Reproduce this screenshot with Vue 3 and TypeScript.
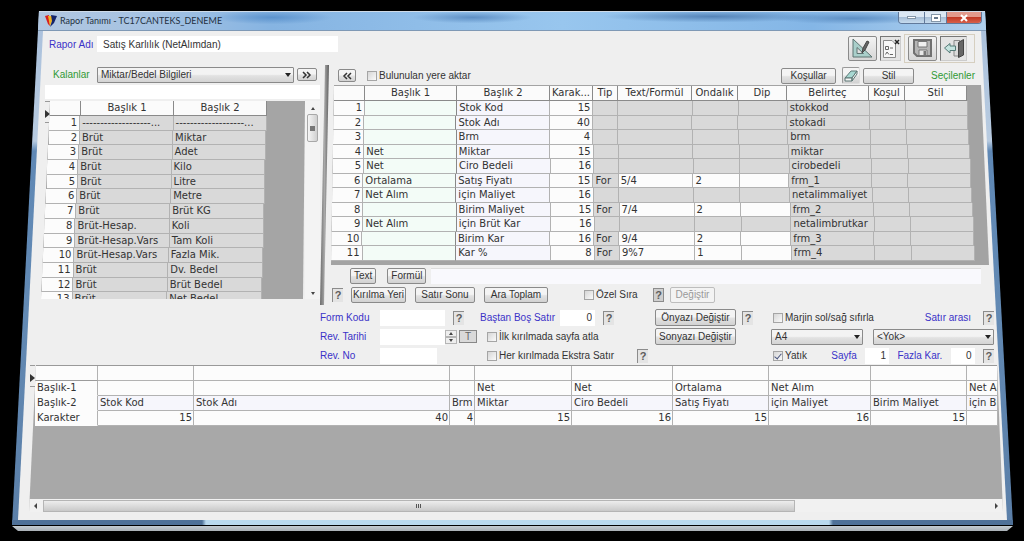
<script setup lang="ts">
import { ref } from 'vue'

interface ReportColumn {
  title1: string
  title2: string
  chars: number
  formula?: string
  decimals?: string
  token: string
}

const reportName = ref('Satış Karlılık (NetAlımdan)')
const group = ref('Miktar/Bedel Bilgileri')
const search = ref('')
const formulaText = ref('')
const insertHere = ref(false)
const customOrder = ref(false)
const formCode = ref('')
const revDate = ref('')
const revNo = ref('')
const emptyRows = ref('0')
const skipPage = ref(false)
const extraRow = ref(false)
const resetMargins = ref(false)
const landscape = ref(true)
const paper = ref('A4')
const lineSpacing = ref('<Yok>')
const pageNo = ref('1')
const extraChars = ref('0')

const dashes = '-------------------...'
const available: [string, string][] = [
  [dashes, dashes],
  ['Brüt', 'Miktar'],
  ['Brüt', 'Adet'],
  ['Brüt', 'Kilo'],
  ['Brüt', 'Litre'],
  ['Brüt', 'Metre'],
  ['Brüt', 'Brüt KG'],
  ['Brüt-Hesap.', 'Koli'],
  ['Brüt-Hesap.Vars', 'Tam Koli'],
  ['Brüt-Hesap.Vars', 'Fazla Mik.'],
  ['Brüt', 'Dv. Bedel'],
  ['Brüt', 'Brüt Bedel'],
  ['Brüt', 'Net Bedel'],
]

const selected: ReportColumn[] = [
  { title1: '', title2: 'Stok Kod', chars: 15, token: 'stokkod' },
  { title1: '', title2: 'Stok Adı', chars: 40, token: 'stokadi' },
  { title1: '', title2: 'Brm', chars: 4, token: 'brm' },
  { title1: 'Net', title2: 'Miktar', chars: 15, token: 'miktar' },
  { title1: 'Net', title2: 'Ciro Bedeli', chars: 16, token: 'cirobedeli' },
  { title1: 'Ortalama', title2: 'Satış Fiyatı', chars: 15, formula: '5/4', decimals: '2', token: 'frm_1' },
  { title1: 'Net Alım', title2: 'için Maliyet', chars: 16, token: 'netalimmaliyet' },
  { title1: '', title2: 'Birim Maliyet', chars: 15, formula: '7/4', decimals: '2', token: 'frm_2' },
  { title1: 'Net Alım', title2: 'için Brüt Kar', chars: 16, token: 'netalimbrutkar' },
  { title1: '', title2: 'Birim Kar', chars: 16, formula: '9/4', decimals: '2', token: 'frm_3' },
  { title1: '', title2: 'Kar %', chars: 8, formula: '9%7', decimals: '1', token: 'frm_4' },
]

const preview = selected.slice(0, 9)

// Rows get wider towards the bottom, following the tilted window edges.
function lean(row: number, rows: number, left: number, right: number) {
  const t = row / rows
  return {
    marginLeft: `${-Math.round(left * t)}px`,
    marginRight: `${-Math.round(right * t)}px`,
  }
}
</script>

<template>
  <main class="stage">
    <section class="frame">
      <header class="titlebar">
        <svg class="logo" viewBox="0 0 12 12" aria-hidden="true">
          <path d="M0 1 L4 0 L5 11 L3 9 Z" fill="#d81f1f" />
          <path d="M3 1 L7 1 L7 6 L5 11 Z" fill="#f0b323" />
          <path d="M6 0 L12 1 L9 8 L5 12 L7 6 Z" fill="#14256b" />
        </svg>
        <h1>Rapor Tanımı - TC17CANTEKS_DENEME</h1>
        <div class="controls">
          <button type="button" class="min" aria-label="Simge durumuna küçült"><span></span></button>
          <button type="button" class="max" aria-label="Ekranı kapla"><span></span></button>
          <button type="button" class="close" aria-label="Kapat">
            <svg viewBox="0 0 8 8"><path d="M1 1 L7 7 M7 1 L1 7" stroke="#fff" stroke-width="2" /></svg>
          </button>
        </div>
      </header>

      <div class="client">
        <div class="top">
          <label class="blue" for="name">Rapor Adı</label>
          <input id="name" v-model="reportName" class="name" type="text" />
          <div class="tools">
            <button type="button" class="tool wide" aria-label="Tasarım">
              <svg viewBox="0 0 27 23">
                <path d="M4 2 V20 H23 Z M8 10.500 V16.500 H14.500 Z" fill="#a9cfca" fill-rule="evenodd" stroke="#5d7371" />
                <path d="M18 4 L20 5 L16 13 L13 16 L14 11 Z" fill="#666" stroke="#444" />
              </svg>
            </button>
            <button type="button" class="tool sunk" aria-label="Belge">
              <svg viewBox="0 0 19 23">
                <path d="M2.500 3.500 H11 L14.500 7 V20.500 H2.500 Z" fill="#f8f8f8" stroke="#8a8a8a" />
                <path d="M4.500 9.500 H7.500 V12.500 H4.500 Z M9 11 H12 M4.500 17.500 L6 15 L8 17.500 M9 17.500 H12" fill="none" stroke="#666" />
                <path d="M14 3 L18 7 M18 3 L14 7" stroke="#222" stroke-width="1.500" />
              </svg>
            </button>
            <div class="pair">
              <button type="button" class="tool wide" aria-label="Kaydet">
                <svg viewBox="0 0 27 23">
                  <path d="M5 3 H22 V19 H8 L5 16 Z" fill="#b5b5b5" stroke="#707070" stroke-width="2" />
                  <path d="M9 4.500 H18 V10 H9 Z" fill="#f0f0f0" stroke="#777" />
                  <path d="M10 13 H18 V18.500 H10 Z" fill="#e8e8e8" stroke="#777" />
                  <path d="M14.500 14 H17 V18 H14.500 Z" fill="#777" />
                </svg>
              </button>
              <button type="button" class="tool exit sunk" aria-label="Çıkış">
                <svg viewBox="0 0 25 23">
                  <path d="M13 3.500 H19 V19 H13 Z" fill="#dcdcdc" stroke="#8a8a8a" />
                  <path d="M17.500 5.500 L22.500 2.500 V18 L17.500 20.500 Z" fill="#666" stroke="#444" />
                  <path d="M3.500 11 L9 6.500 V9 H14.500 V13.500 H9 V16 Z" fill="#c5e4e0" stroke="#557a77" />
                </svg>
              </button>
            </div>
          </div>
        </div>

        <div class="body">
          <section class="left">
            <div class="bar leftbar">
              <label class="green" for="group">Kalanlar</label>
              <span class="drop groupdrop">
                <select id="group" v-model="group"><option>Miktar/Bedel Bilgileri</option></select>
              </span>
              <button type="button" class="btn chev" aria-label="Aktar">
                <svg viewBox="0 0 10 8"><path d="M1 1 L4 4 L1 7 M5 1 L8 4 L5 7" /></svg>
              </button>
            </div>
            <input v-model="search" class="search" type="text" aria-label="Ara" />
            <div class="availwrap">
              <span class="marker"></span>
              <div class="availbox">
                <table class="grid avail">
                  <thead>
                    <tr><th></th><th>Başlık 1</th><th>Başlık 2</th></tr>
                  </thead>
                  <tbody>
                    <tr v-for="(row, i) in available" :key="i" :style="lean(i + 1, 13, 9, -5)">
                      <td class="num white">{{ i + 1 }}</td>
                      <td>{{ row[0] }}</td>
                      <td>{{ row[1] }}</td>
                    </tr>
                  </tbody>
                </table>
              </div>
              <div class="vscroll">
                <i class="up"></i>
                <span class="vthumb"></span>
                <i class="down"></i>
              </div>
            </div>
          </section>

          <div class="splitter"></div>

          <section class="right">
            <div class="bar rightbar">
              <button type="button" class="btn chev back" aria-label="Geri al">
                <svg viewBox="0 0 10 8"><path d="M5 1 L2 4 L5 7 M9 1 L6 4 L9 7" /></svg>
              </button>
              <label class="check"><input v-model="insertHere" type="checkbox" />Bulunulan yere aktar</label>
              <div class="barend">
                <button type="button" class="btn kosul">Koşullar</button>
                <button type="button" class="btn eraser" aria-label="Temizle">
                  <svg viewBox="0 0 16 16">
                    <path d="M2 10 L8 3 H14 L9 10 Z" fill="#a7d8d2" stroke="#5c7775" />
                    <path d="M2 10 H9 V13 H2 Z M9 10 L14 3 V6 L9 13 Z" fill="#f4f4f4" stroke="#5c7775" />
                  </svg>
                </button>
                <button type="button" class="btn stil">Stil</button>
                <span class="green">Seçilenler</span>
              </div>
            </div>
            <div class="selbox">
              <table class="grid sel">
                <thead>
                  <tr>
                    <th></th><th>Başlık 1</th><th>Başlık 2</th><th>Karak...</th><th>Tip</th>
                    <th>Text/Formül</th><th>Ondalık</th><th>Dip</th><th>Belirteç</th><th>Koşul</th><th>Stil</th>
                  </tr>
                </thead>
                <tbody>
                  <tr v-for="(c, i) in selected" :key="c.token" :style="lean(i + 1, 11, 3, 8)">
                    <td class="num white">{{ i + 1 }}</td>
                    <td class="mint">{{ c.title1 }}</td>
                    <td class="lilac">{{ c.title2 }}</td>
                    <td class="num white">{{ c.chars }}</td>
                    <td>{{ c.formula ? 'For' : '' }}</td>
                    <td :class="{ white: c.formula }">{{ c.formula }}</td>
                    <td :class="{ white: c.formula }">{{ c.decimals }}</td>
                    <td :class="{ white: c.formula }"></td>
                    <td>{{ c.token }}</td>
                    <td></td>
                    <td></td>
                  </tr>
                </tbody>
              </table>
            </div>
            <div class="formulabar">
              <button type="button" class="btn">Text</button>
              <button type="button" class="btn">Formül</button>
              <input v-model="formulaText" type="text" aria-label="Formül metni" />
            </div>
            <div class="breakbar">
              <button type="button" class="help" aria-label="Yardım">?</button>
              <button type="button" class="btn b1">Kırılma Yeri</button>
              <button type="button" class="btn b2">Satır Sonu</button>
              <button type="button" class="btn b3">Ara Toplam</button>
              <label class="check order"><input v-model="customOrder" type="checkbox" />Özel Sıra</label>
              <button type="button" class="help dark" aria-label="Yardım">?</button>
              <button type="button" class="btn b4" disabled>Değiştir</button>
            </div>
          </section>
        </div>

        <div class="form">
          <div class="col ids">
            <div class="line">
              <label class="blue" for="code">Form Kodu</label>
              <input id="code" v-model="formCode" class="w66" type="text" />
              <button type="button" class="help gap" aria-label="Yardım">?</button>
            </div>
            <div class="line">
              <label class="blue" for="date">Rev. Tarihi</label>
              <input id="date" v-model="revDate" class="w66" type="text" />
              <span class="spin">
                <button type="button" aria-label="Artır"><i class="up"></i></button>
                <button type="button" aria-label="Azalt"><i class="down"></i></button>
              </span>
              <button type="button" class="today">T</button>
            </div>
            <div class="line">
              <label class="blue" for="rev">Rev. No</label>
              <input id="rev" v-model="revNo" class="w57" type="text" />
            </div>
          </div>
          <div class="col opts">
            <div class="line">
              <label class="blue empties" for="empty">Baştan Boş Satır</label>
              <input id="empty" v-model="emptyRows" class="w34 r" type="text" />
              <button type="button" class="help gap" aria-label="Yardım">?</button>
            </div>
            <div class="line inset">
              <label class="check"><input v-model="skipPage" type="checkbox" />İlk kırılmada sayfa atla</label>
            </div>
            <div class="line inset">
              <label class="check"><input v-model="extraRow" type="checkbox" />Her kırılmada Ekstra Satır</label>
              <button type="button" class="help end" aria-label="Yardım">?</button>
            </div>
          </div>
          <div class="col texts">
            <div class="line">
              <button type="button" class="btn wbtn">Önyazı Değiştir</button>
              <button type="button" class="help" aria-label="Yardım">?</button>
            </div>
            <div class="line">
              <button type="button" class="btn wbtn">Sonyazı Değiştir</button>
            </div>
          </div>
          <div class="col page">
            <div class="line">
              <label class="check"><input v-model="resetMargins" type="checkbox" />Marjin sol/sağ sıfırla</label>
              <label class="blue spacing" for="spacing">Satır arası</label>
              <button type="button" class="help" aria-label="Yardım">?</button>
            </div>
            <div class="line drops">
              <span class="drop paper">
                <select v-model="paper" aria-label="Kağıt"><option>A4</option></select>
              </span>
              <span class="drop space">
                <select id="spacing" v-model="lineSpacing"><option>&lt;Yok&gt;</option></select>
              </span>
            </div>
            <div class="line">
              <label class="check yatik"><input v-model="landscape" type="checkbox" />Yatık</label>
              <label class="blue" for="page">Sayfa</label>
              <input id="page" v-model="pageNo" class="plain r" type="text" />
              <label class="blue" for="extra">Fazla Kar.</label>
              <input id="extra" v-model="extraChars" class="plain r" type="text" />
              <button type="button" class="help" aria-label="Yardım">?</button>
            </div>
          </div>
        </div>

        <section class="preview">
          <span class="marker"></span>
          <div class="prevbox">
            <table class="grid prev">
              <tbody>
                <tr>
                  <th></th>
                  <td v-for="c in preview" :key="c.token" class="white"></td>
                </tr>
                <tr>
                  <th scope="row">Başlık-1</th>
                  <td v-for="c in preview" :key="c.token" class="white">{{ c.title1 }}</td>
                </tr>
                <tr>
                  <th scope="row">Başlık-2</th>
                  <td v-for="c in preview" :key="c.token" class="lilac">{{ c.title2 }}</td>
                </tr>
                <tr>
                  <th scope="row">Karakter</th>
                  <td v-for="(c, i) in preview" :key="c.token" class="white num">{{ i < 8 ? c.chars : '' }}</td>
                </tr>
              </tbody>
            </table>
            <div class="hscroll">
              <i class="prevarrow"></i>
              <span class="hthumb"><b></b><b></b><b></b></span>
              <i class="nextarrow"></i>
            </div>
          </div>
        </section>
      </div>
    </section>
    <div class="base"></div>
  </main>
</template>

<style>
body {
  margin: 0;
  background: #000;
}
</style>

<style scoped>
* {
  box-sizing: border-box;
}
.stage {
  min-height: 100vh;
  padding: 11px 11px 0 12px;
  background: #000;
  color: #333;
  font: 10px/12px "Liberation Sans", Arial, sans-serif;
  overflow: hidden;
}
button,
input,
select {
  font: inherit;
  color: inherit;
  margin: 0;
  padding: 0;
  border: 0;
  border-radius: 0;
  outline: 0;
}
svg {
  display: block;
}

/* window frame */
.frame {
  padding: 0 6px 5px;
  clip-path: polygon(27px 0, calc(100% - 28px) 0, 100% 100%, 0 100%);
  background:
    linear-gradient(90deg, #4f7198 0 190px, #b9d9ee 194px calc(100% - 184px), #4f7198 calc(100% - 180px)) bottom / 100% 5px no-repeat,
    linear-gradient(180deg, #a9c0dc 0, #b8cbe0 130px, #5f88b5 140px, #6289b3 60%, #5b7fa8 100%);
}
.titlebar {
  display: flex;
  align-items: flex-start;
  height: 20px;
  margin: 0 -6px;
  padding: 0 31px 0 33px;
  border-top: 1px solid #cfdbe8;
  border-bottom: 1px solid #7f99b5;
  background:
    radial-gradient(ellipse 60px 7px at 26% 30%, #5c93cd 0, transparent 100%),
    radial-gradient(ellipse 60px 6px at 46% 30%, #5e8fc4 0, transparent 100%),
    radial-gradient(ellipse 110px 6px at 70% 25%, #5584b8 0, transparent 100%),
    radial-gradient(ellipse 80px 6px at 84% 35%, #5d8fc4 0, transparent 100%),
    linear-gradient(90deg, #b4c8e0 0, #a5c2e2 14%, #86b4e2 26%, #98c6ee 55%, #84b6e6 80%, #b6d3ee 100%);
}
.logo {
  width: 12px;
  height: 12px;
  margin-top: 3px;
}
h1 {
  margin: 2px 0 0 3px;
  font: 9px/14px Lato, "Open Sans", sans-serif;
  color: #23303f;
}
.controls {
  display: flex;
  margin-left: auto;
  height: 12px;
  border: 1px solid #61799a;
  border-top: 0;
  border-radius: 0 0 4px 4px;
  overflow: hidden;
}
.controls button {
  display: grid;
  place-items: center;
  width: 22px;
  background: linear-gradient(#dbe7f3 45%, #a9c0d8 50%, #c6dbee);
  border-right: 1px solid #61799a;
}
.controls .min {
  width: 26px;
}
.controls .min span {
  width: 9px;
  height: 3px;
  background: #fff;
  border: 1px solid #8496a8;
}
.controls .max span {
  width: 8px;
  height: 6px;
  background: #66788c;
  border: 2px solid #fff;
  outline: 1px solid #8496a8;
}
.controls .close {
  width: 34px;
  border: 0;
  background: linear-gradient(#e39a8c 45%, #c23a26 50%, #d8604a);
}
.close svg {
  width: 8px;
  height: 8px;
}
.client {
  padding-bottom: 8px;
  background: #efefef;
  clip-path: polygon(25px 0, calc(100% - 26px) 0, 100% 100%, 0 100%);
}
.base {
  height: 5px;
  margin-top: 1px;
  background: linear-gradient(#c4ccd2, #a9b0b6);
  clip-path: polygon(0 0, 100% 0, calc(100% - 6px) 100%, 6px 100%);
}

/* shared controls */
.blue {
  color: #3a32c8;
  white-space: nowrap;
}
.green {
  color: #2f9a35;
  white-space: nowrap;
}
.btn {
  height: 16px;
  padding: 0 4px;
  border: 1px solid #8a8a8a;
  border-radius: 2px;
  background: linear-gradient(#f4f4f4 45%, #e2e2e2 55%, #d2d2d2);
  line-height: 13px;
  white-space: nowrap;
}
.btn:disabled {
  color: #9a9a9a;
  border-color: #bdbdbd;
  background: #f3f3f3;
}
.check {
  display: flex;
  align-items: center;
  gap: 2px;
  white-space: nowrap;
}
.check input {
  appearance: none;
  width: 10px;
  height: 10px;
  border: 1px solid #a5a5a5;
  background: linear-gradient(135deg, #d6d6d6, #fafafa);
  display: grid;
  place-items: center;
}
.check input:checked::after {
  content: "";
  width: 3px;
  height: 6px;
  border: solid #4a5680;
  border-width: 0 1px 1px 0;
  transform: rotate(40deg);
}
.help {
  flex: none;
  width: 11px;
  height: 14px;
  background: #e4e4e4;
  border: solid #8c8c8c;
  border-width: 1px 0 0 1px;
  color: #5c5c5c;
  font: bold 11px/12px "Liberation Sans", Arial, sans-serif;
}
.help.dark {
  background: #cfcfcf;
  border-width: 1px;
}
.drop {
  position: relative;
  display: block;
  height: 16px;
}
.drop select {
  appearance: none;
  width: 100%;
  height: 100%;
  padding: 0 3px;
  border: 1px solid #8a8a8a;
  border-radius: 1px;
  background: linear-gradient(#f3f3f3 45%, #e2e2e2 55%, #d4d4d4);
}
.drop::after {
  content: "";
  position: absolute;
  right: 3px;
  top: 6px;
  border: 3px solid transparent;
  border-top: 4px solid #222;
  border-bottom: 0;
  pointer-events: none;
}

/* header strip */
.top {
  display: flex;
  align-items: flex-start;
  height: 33px;
  padding: 3px 32px 0 31px;
}
.top .blue {
  width: 48px;
  margin-top: 5px;
}
.name {
  width: 241px;
  height: 16px;
  margin-top: 2px;
  padding-left: 6px;
  background: #fff;
}
.tools {
  display: flex;
  align-items: center;
  gap: 3px;
  margin-left: auto;
}
.tool {
  display: grid;
  place-items: center;
  width: 21px;
  height: 25px;
  border: 1px solid #8a8a8a;
  border-radius: 2px;
  background: linear-gradient(#f3f3f3, #d6d6d6);
}
.tool.sunk {
  border-color: #777 #ccc #ccc #777;
  border-radius: 0;
  background: #e4e4e4;
}
.tool svg {
  width: 100%;
  height: 23px;
}
.tool.wide {
  width: 29px;
}
.tool.exit {
  width: 27px;
}
.pair {
  display: flex;
  align-items: center;
  gap: 3px;
  height: 29px;
  padding: 0 7px 0 3px;
  border: 1px solid #d6cfc0;
}

/* two panes */
.body {
  display: flex;
  padding-left: 27px;
}
.left {
  width: 275px;
  flex: none;
}
.bar {
  display: flex;
  align-items: center;
  height: 21px;
}
.leftbar .green {
  width: 52px;
  padding-left: 8px;
}
.groupdrop {
  width: 197px;
}
.chev {
  display: grid;
  place-items: center;
  width: 20px;
  height: 13px;
  margin-left: 3px;
  padding: 0;
}
.chev svg {
  width: 10px;
  height: 8px;
  fill: none;
  stroke: #333;
  stroke-width: 1.5px;
}
.search {
  display: block;
  width: 100%;
  height: 14px;
  background: #fff;
}
.availwrap {
  position: relative;
  display: flex;
  height: 198px;
  margin: 2px 0 0 -5px;
}
.marker {
  position: absolute;
  left: 5px;
  top: 0;
  width: 5px;
  height: 22px;
  border-top: 1px solid #999;
  border-bottom: 1px solid #999;
}
.marker::after {
  content: "";
  position: absolute;
  left: 0;
  top: 8px;
  border: 4px solid transparent;
  border-left: 5px solid #333;
  border-right: 0;
}
.availbox {
  flex: 1;
  padding: 0 38px 0 10px;
  overflow: hidden;
  background: #a5a5a5;
  clip-path: polygon(10px 0, 100% 0, calc(100% - 2px) 100%, 1px 100%);
}
.vscroll {
  display: flex;
  flex-direction: column;
  align-items: center;
  width: 15px;
  padding: 6px 0 4px;
  background: #f3f3f3;
}
.vthumb {
  width: 11px;
  height: 28px;
  margin: 4px 0 auto;
  border: 1px solid #a8a8a8;
  border-radius: 2px;
  background:
    linear-gradient(#777, #777) center / 5px 5px no-repeat,
    linear-gradient(90deg, #f5f5f5, #d0d0d0);
}
.up,
.down {
  display: block;
  border: 2px solid transparent;
}
.up {
  border-top: 0;
  border-bottom: 3px solid #444;
}
.down {
  border-bottom: 0;
  border-top: 3px solid #444;
}

/* data grids */
.grid {
  display: block;
  font: 10px/12px "DejaVu Sans", Verdana, sans-serif;
}
.grid thead {
  display: block;
}
.grid tbody {
  display: flex;
  flex-direction: column;
}
.grid tr {
  display: grid;
  flex: 1;
  min-height: 0;
}
.grid th,
.grid td {
  min-width: 0;
  padding: 0 2px;
  overflow: hidden;
  white-space: nowrap;
  text-align: left;
  font-weight: normal;
  line-height: 14px;
  border: solid #b2b2b2;
  border-width: 0 1px 1px 0;
  background: #d9d9d9;
}
.grid thead th {
  height: 15px;
  padding: 0 1px;
  text-align: center;
  background: #fbfbfb;
  border-color: #8a8a8a;
}
.grid .white {
  background: #fcfcfc;
}
.grid .mint {
  background: #f3fcf7;
  border-right-color: #888;
}
.grid .lilac {
  background: #f6f6fc;
}
.grid .num {
  text-align: right;
}
.avail tr {
  grid-template-columns: 31fr 93fr 93fr;
}
.avail tbody {
  height: 191px;
}
.splitter {
  flex: none;
  width: 9px;
  background: linear-gradient(90deg, #6b6b6b, #a8a8a8, #5e5e5e);
  clip-path: polygon(5px 1px, 9px 1px, 4px 100%, 0 100%);
}
.right {
  flex: 1;
  min-width: 0;
}
.rightbar {
  padding: 2px 32px 0 9px;
}
.back {
  width: 18px;
  margin: 0 11px 0 0;
}
.barend {
  display: flex;
  align-items: center;
  margin-left: auto;
}
.kosul {
  width: 55px;
}
.eraser {
  width: 18px;
  height: 17px;
  margin: 0 3px 0 6px;
  padding: 0;
  border-color: #999 #ddd #ddd #999;
}
.stil {
  width: 51px;
  margin-right: 17px;
}
.selbox {
  height: 180px;
  margin: 0 18px 0 2px;
  padding: 1px 22px 0 3px;
  background: #a3a3a3;
  clip-path: polygon(3px 0, calc(100% - 8px) 0, 100% 100%, 0 100%);
}
.sel tr {
  grid-template-columns: 31fr 92fr 93fr 43fr 25fr 74fr 46fr 49fr 82fr 36fr 62fr;
}
.sel tbody {
  height: 160px;
}
.formulabar {
  display: flex;
  align-items: center;
  height: 17px;
  margin-top: 2px;
  padding: 0 26px 0 21px;
}
.formulabar .btn {
  margin-right: 11px;
  padding: 0 3px;
}
.formulabar .btn + .btn {
  margin-right: 5px;
}
.formulabar input {
  flex: 1;
  min-width: 0;
  height: 16px;
  background: #f9f9fd;
  border-top: 1px solid #ddd;
}
.breakbar {
  display: flex;
  align-items: center;
  height: 21px;
  padding-left: 3px;
}
.b1 {
  width: 55px;
  margin-left: 8px;
  padding: 0;
}
.b2 {
  width: 60px;
  margin-left: 9px;
}
.b3 {
  width: 64px;
  margin-left: 9px;
}
.order {
  width: 69px;
  margin-left: 36px;
}
.b4 {
  width: 45px;
  margin-left: 6px;
}

/* settings */
.form {
  display: flex;
  padding: 3px 13px 0 302px;
}
.col {
  flex: none;
}
.line {
  display: flex;
  align-items: center;
  height: 19px;
}
.line input[type="text"] {
  height: 16px;
  background: #fff;
}
.line .r {
  padding-right: 3px;
  text-align: right;
}
.ids {
  width: 160px;
}
.ids .blue {
  width: 60px;
}
.w66 {
  width: 65px;
}
.w57 {
  width: 57px;
}
.w34 {
  width: 35px;
}
.help.gap {
  margin-left: 8px;
}
.spin {
  display: flex;
  flex-direction: column;
  width: 12px;
}
.spin button {
  display: grid;
  place-items: center;
  height: 7px;
  border: 1px solid #b5b5b5;
  background: #eee;
}
.today {
  width: 18px;
  height: 13px;
  margin-left: 2px;
  border: 1px solid #888;
  background: #d9d9d9;
  line-height: 11px;
  color: #666;
}
.opts {
  width: 175px;
}
.empties {
  width: 80px;
}
.inset {
  padding-left: 7px;
}
.help.end {
  margin: 0 7px 0 auto;
}
.texts {
  width: 116px;
}
.wbtn {
  width: 81px;
  height: 17px;
  margin-right: 6px;
  padding: 0;
}
.page {
  flex: 1;
}
.page .line {
  justify-content: space-between;
}
.page .check {
  padding-left: 2px;
}
.page .spacing {
  margin: 0 12px 0 auto;
}
.drops {
  gap: 10px;
}
.paper {
  width: 92px;
}
.space {
  flex: 1;
}
.yatik {
  width: 52px;
}
.line .plain {
  width: 24px;
  background: #f4f4f4;
}

/* preview */
.preview {
  position: relative;
  margin: 0 4px 0 11px;
}
.preview .marker {
  left: 1px;
}
.prevbox {
  padding-left: 6px;
  background: #a8a8a8;
  clip-path: polygon(7px 0, calc(100% - 6px) 0, 100% 100%, 0 100%);
}
.prev {
  overflow: hidden;
  margin-right: 5px;
  border-top: 1px solid #999;
}
.prev tr {
  flex: none;
  height: 15px;
  grid-template-columns: 63px 96px 256px 25px 97px 101px 96px 102px 96px 1fr;
}
.prev th {
  background: #fcfcfc;
  border-bottom-color: transparent;
}
.prev tr:first-child th {
  border-bottom-color: #9b9b9b;
}
.prev td {
  padding: 0 1px 0 2px;
}
.hscroll {
  display: flex;
  align-items: center;
  height: 13px;
  margin: 73px 0 0 -6px;
  padding: 0 5px;
  background: #f1f1f1;
}
.prevarrow,
.nextarrow {
  border: 3px solid transparent;
}
.prevarrow {
  border-left: 0;
  border-right-color: #444;
}
.nextarrow {
  margin-left: auto;
  border-right: 0;
  border-left-color: #444;
}
.hthumb {
  display: flex;
  align-items: center;
  justify-content: center;
  gap: 1px;
  width: 78%;
  height: 12px;
  margin-left: 6px;
  border: 1px solid #b5b5b5;
  background: linear-gradient(#ededed, #c9c9c9);
}
.hthumb b {
  width: 1px;
  height: 4px;
  background: #555;
}
</style>
